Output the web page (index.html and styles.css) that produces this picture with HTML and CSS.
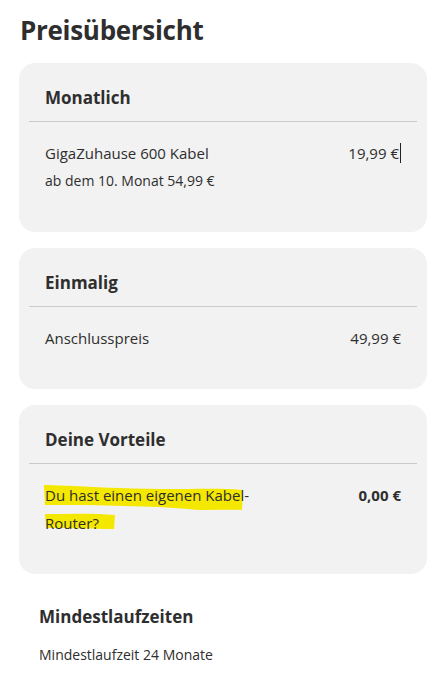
FILE: index.html
```html
<!DOCTYPE html>
<html lang="de">
<head>
    <meta charset="UTF-8">
    <title>Preisübersicht</title>
    <meta name="viewport" content="width=device-width, initial-scale=1">
    <link rel="stylesheet" href="styles.css">
</head>
<body>
    <div class="page">
        <h1 class="title">Preisübersicht</h1>

        <div class="card">
            <h2 class="card-head">Monatlich</h2>
            <div class="row">
                <div class="row-label">
                    <div>GigaZuhause 600 Kabel</div>
                    <div class="sub">ab dem 10. Monat 54,99 €</div>
                </div>
                <div class="row-price">19,99 €<span class="caret"></span></div>
            </div>
        </div>

        <div class="card">
            <h2 class="card-head">Einmalig</h2>
            <div class="row">
                <div class="row-label">Anschlusspreis</div>
                <div class="row-price">49,99 €</div>
            </div>
        </div>

        <div class="card">
            <h2 class="card-head">Deine Vorteile</h2>
            <div class="row">
                <div class="row-label marked">
                    <svg class="marker" width="220" height="60" viewBox="0 0 220 60">
                        <path d="M1 2 C40 3 80 6 120 6 C160 6 185 5 200 7 L199 27 C180 26 160 28 145 26 C110 23 60 22 2 22 Z" fill="#f5e800"/>
                        <path d="M2 31 C25 31 50 30 72 32 L71 46 C50 46 25 45 3 45 Z" fill="#f5e800"/>
                    </svg>
                    <span class="marked-text">Du hast einen eigenen Kabel-<br>Router?</span>
                </div>
                <div class="row-price strong">0,00 €</div>
            </div>
        </div>

        <div class="info">
            <h2 class="info-head">Mindestlaufzeiten</h2>
            <p class="info-text">Mindestlaufzeit 24 Monate</p>
        </div>
    </div>
</body>
</html>
```

FILE: styles.css
```css
body { margin: 0; background: #fff; color: #2e2e2e; font-family: "Open Sans", "Noto Sans", sans-serif; }
.page { padding: 12px 18px 20px 19px; }
.title { margin: 0 0 15px 1px; font-size: 26px; line-height: 36px; font-weight: 700; letter-spacing: -0.3px; }

.card { background: #f2f2f2; border-radius: 16px; padding: 0 10px 37px; margin-bottom: 16px; }
.card-head { margin: 0; padding: 23px 16px 11px; font-size: 17px; line-height: 24px; font-weight: 700; border-bottom: 1px solid #cacaca; }
.row { display: flex; justify-content: space-between; align-items: flex-start; padding: 17px 16px 0; font-size: 15px; line-height: 28px; }
.row-label .sub { font-size: 14px; }
.row-price { white-space: nowrap; }
.row-price.strong { font-weight: 700; }
.caret { display: inline-block; width: 1px; height: 20px; background: #222; vertical-align: -4px; margin-left: 1px; }

.marked { position: relative; }
.marker { position: absolute; left: -2px; top: 2px; z-index: 0; }
.marked-text { position: relative; z-index: 1; }

.info { padding: 15px 20px 0; }
.info-head { margin: 0; font-size: 17px; line-height: 24px; font-weight: 700; }
.info-text { margin: 14px 0 0; font-size: 14px; line-height: 24px; }
```
